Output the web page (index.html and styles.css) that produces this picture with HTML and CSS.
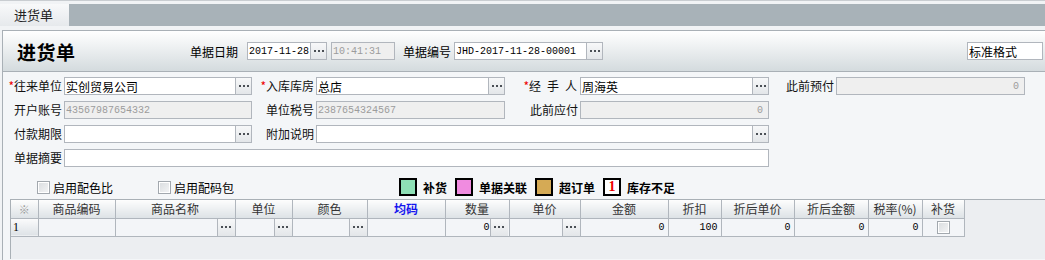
FILE: index.html
```html
<!DOCTYPE html>
<html>
	<head>
		<meta charset="UTF-8">
		<title>进货单</title>
		<link rel="stylesheet" href="styles.css">
	</head>
	<body>
		<div class="tabs">
			<div class="tab">进货单</div>
		</div>
		<div class="doc">
			<div class="head">
				<h1>进货单</h1>
				<span class="hl">单据日期</span>
				<span class="box date"><input type="text" value="2017-11-28" /><i class="btn"></i></span>
				<span class="box time off"><input type="text" value="10:41:31" disabled /></span>
				<span class="hl no-l">单据编号</span>
				<span class="box billno"><input type="text" value="JHD-2017-11-28-00001" /><i class="btn"></i></span>
				<span class="box fmt"><input type="text" value="标准格式" class="cn" /></span>
			</div>

			<div class="form">
				<label><em>*</em>往来单位</label>
				<span class="box"><input type="text" value="实创贸易公司" class="cn" /><i class="btn"></i></span>
				<label><em>*</em>入库库房</label>
				<span class="box"><input type="text" value="总店" class="cn" /><i class="btn"></i></span>
				<label><em>*</em><b class="wide">经手人</b></label>
				<span class="box"><input type="text" value="周海英" class="cn" /><i class="btn"></i></span>
				<label>此前预付</label>
				<span class="box off"><input type="text" value="0" class="num" disabled /></span>

				<label>开户账号</label>
				<span class="box off"><input type="text" value="43567987654332" disabled /></span>
				<label>单位税号</label>
				<span class="box off"><input type="text" value="2387654324567" disabled /></span>
				<label>此前应付</label>
				<span class="box off"><input type="text" value="0" class="num" disabled /></span>
				<span></span><span></span>

				<label>付款期限</label>
				<span class="box"><input type="text" /><i class="btn"></i></span>
				<label>附加说明</label>
				<span class="box span3"><input type="text" /><i class="btn"></i></span>
				<span></span><span></span>

				<label>单据摘要</label>
				<span class="box span5"><input type="text" /></span>
			</div>

			<div class="opts">
				<span class="chk"><i class="cb"></i>启用配色比</span>
				<span class="chk second"><i class="cb"></i>启用配码包</span>
				<span class="legend first"><i class="sq green"></i>补货</span>
				<span class="legend"><i class="sq pink"></i>单据关联</span>
				<span class="legend"><i class="sq tan"></i>超订单</span>
				<span class="legend"><i class="sq lack">1</i>库存不足</span>
			</div>

			<div class="grid">
				<table>
					<colgroup>
						<col style="width:27px"><col style="width:77px"><col style="width:120px"><col style="width:57px">
						<col style="width:75px"><col style="width:78px"><col style="width:64px"><col style="width:71px">
						<col style="width:88px"><col style="width:53px"><col style="width:73px"><col style="width:74px">
						<col style="width:54px"><col style="width:42px">
					</colgroup>
					<tr>
						<th class="star">※</th>
						<th>商品编码</th>
						<th>商品名称</th>
						<th>单位</th>
						<th>颜色</th>
						<th class="blue">均码</th>
						<th>数量</th>
						<th>单价</th>
						<th>金额</th>
						<th>折扣</th>
						<th>折后单价</th>
						<th>折后金额</th>
						<th>税率(%)</th>
						<th>补货</th>
					</tr>
					<tr>
						<td class="rowno">1</td>
						<td></td>
						<td class="pick"><i class="btn"></i></td>
						<td class="pick"><i class="btn"></i></td>
						<td class="pick"><i class="btn"></i></td>
						<td></td>
						<td class="pick n"><i class="btn"></i>0</td>
						<td class="pick"><i class="btn"></i></td>
						<td class="n">0</td>
						<td class="n">100</td>
						<td class="n">0</td>
						<td class="n">0</td>
						<td class="n">0</td>
						<td class="c"><i class="cb"></i></td>
					</tr>
				</table>
			</div>
		</div>
	</body>
</html>
```
FILE: styles.css
```css
*{margin: 0;padding: 0;box-sizing: border-box;}
body{
	width: 1045px;
	height: 260px;
	overflow: hidden;
	background: #f1f3f5;
	border-top: 1px solid #c9cdd1;
	font-size: 12px;
	font-family: "Noto Sans CJK SC", "Liberation Sans", sans-serif;
	color: #000;
}
input{border: 0;outline: none;background: transparent;}
i{font-style: normal;}

.tabs{
	display: flex;
	height: 22px;
	margin-top: 3px;
	background: #a8b2b8;
}
.tab{
	width: 69px;
	padding-left: 14px;
	line-height: 22px;
	font-size: 13px;
	color: #222;
	background: linear-gradient(#f8f9fa, #e6e9ec);
}

.doc{
	margin: 4px 0 0 2px;
	height: 230px;
	overflow: hidden;
	border-left: 1px solid #a9b0b6;
	border-top: 1px solid #a9b0b6;
	background: #f4f6f8;
}

/* header */
.head{
	height: 41px;
	display: flex;
	align-items: center;
	border-bottom: 1px solid #a9b0b6;
	background: linear-gradient(#ffffff, #d4dbde);
}
.head h1{
	width: 173px;
	margin-left: 14px;
	font-size: 19px;
	font-weight: bold;
	letter-spacing: 0.5px;
}
.hl{margin-right: 9px;}
.hl.no-l{margin-left: 8px;margin-right: 3px;}

.box{
	display: flex;
	height: 18px;
	border: 1px solid #b1b6bd;
	background: #fff;
}
.box input{
	flex: 1;
	min-width: 0;
	height: 16px;
	padding: 0 1px;
	font-family: "Liberation Mono", monospace;
	font-size: 10px;
	color: #000;
}
.box input.cn{font-family: "Noto Sans CJK SC", sans-serif;font-size: 12px;}
.box input.num{text-align: right;padding-right: 5px;}
.box.off{background: #efefef;}
.box.off input{color: #9c9c9c;}
.btn{
	position: relative;
	display: block;
	width: 16px;
	height: 16px;
	border-left: 1px solid #b1b6bd;
	background: linear-gradient(#f7f8f9, #e3e6e9);
}
.btn::before{
	content: "";
	position: absolute;
	left: 3px;
	top: 7px;
	width: 2px;
	height: 2px;
	background: #4a4f55;
	box-shadow: 4px 0 #4a4f55, 8px 0 #4a4f55;
}
.date{width: 80px;}
.time{width: 64px;margin-left: 4px;}
.billno{width: 149px;}
.fmt{width: 76px;margin-left: auto;margin-right: 2px;}

/* form */
.form{
	display: grid;
	grid-template-columns: 61px 188px 64px 189px 75px 189px 67px 189px;
	grid-auto-rows: 18px;
	row-gap: 6px;
	padding-top: 5px;
}
.form label{
	text-align: right;
	padding-right: 2px;
	line-height: 18px;
	white-space: nowrap;
	color: #111;
}
.form label em{color: #e00;font-style: normal;}
.form .wide{font-weight: normal;letter-spacing: 6px;margin-right: -5px;}
.span3{grid-column: span 3;}
.span5{grid-column: span 5;}

/* options */
.opts{
	display: flex;
	align-items: center;
	height: 20px;
	margin-top: 10px;
	padding-left: 34px;
}
.chk{display: flex;align-items: center;}
.chk.second{margin-left: 45px;}
.cb{
	display: inline-block;
	width: 13px;
	height: 13px;
	margin-right: 3px;
	border: 1px solid #a2a8ae;
	background: linear-gradient(135deg, #d9dcdf, #f4f5f6);
	box-shadow: inset 0 0 0 1px #fff;
}
.legend{
	display: flex;
	align-items: center;
	margin-left: 8px;
	font-weight: bold;
}
.legend.first{margin-left: 165px;}
.sq{
	width: 18px;
	height: 18px;
	margin-right: 6px;
	border: 2px solid #000;
	text-align: center;
	line-height: 14px;
	font-family: "Liberation Serif", serif;
	font-size: 14px;
	color: #e00;
}
.sq.green{background: #8ee0b6;}
.sq.pink{background: #f08be0;}
.sq.tan{background: #d5aa55;}
.sq.lack{background: #fff;}

/* grid */
.grid{
	margin-left: 7px;
	margin-top: 2px;
	height: 60px;
	border-top: 1px solid #a9b0b6;
	border-left: 1px solid #a9b0b6;
	background: #eceef1;
}
.grid table{
	border-collapse: collapse;
	table-layout: fixed;
	width: 953px;
}
.grid th, .grid td{
	height: 18px;
	border-right: 1px solid #b0b6bd;
	border-bottom: 1px solid #b0b6bd;
	white-space: nowrap;
	overflow: hidden;
}
.grid th{
	font-weight: normal;
	color: #333;
	background: linear-gradient(#fdfdfd, #dde2e6);
	line-height: 16px;
}
.grid th.star{color: #999;font-size: 11px;}
.grid th.blue{color: #1515ee;font-weight: bold;}
.grid td{
	background: #f3f5f8;
	font-family: "Liberation Mono", monospace;
	font-size: 10px;
	line-height: 17px;
	padding: 0 3px;
}
.grid td.rowno{
	background: linear-gradient(#fbfbfc, #dde2e6);
	font-family: "Liberation Serif", serif;
	font-size: 12px;
	padding: 0 2px;
}
.grid td.n{text-align: right;}
.grid td.pick{padding: 0;text-align: right;}
.grid td.pick .btn{float: right;height: 17px;width: 18px;}
.grid td.pick.n{padding-right: 1px;}
.grid td.c{text-align: center;line-height: 0;}
.grid td.c .cb{margin: 0;vertical-align: middle;}
```
